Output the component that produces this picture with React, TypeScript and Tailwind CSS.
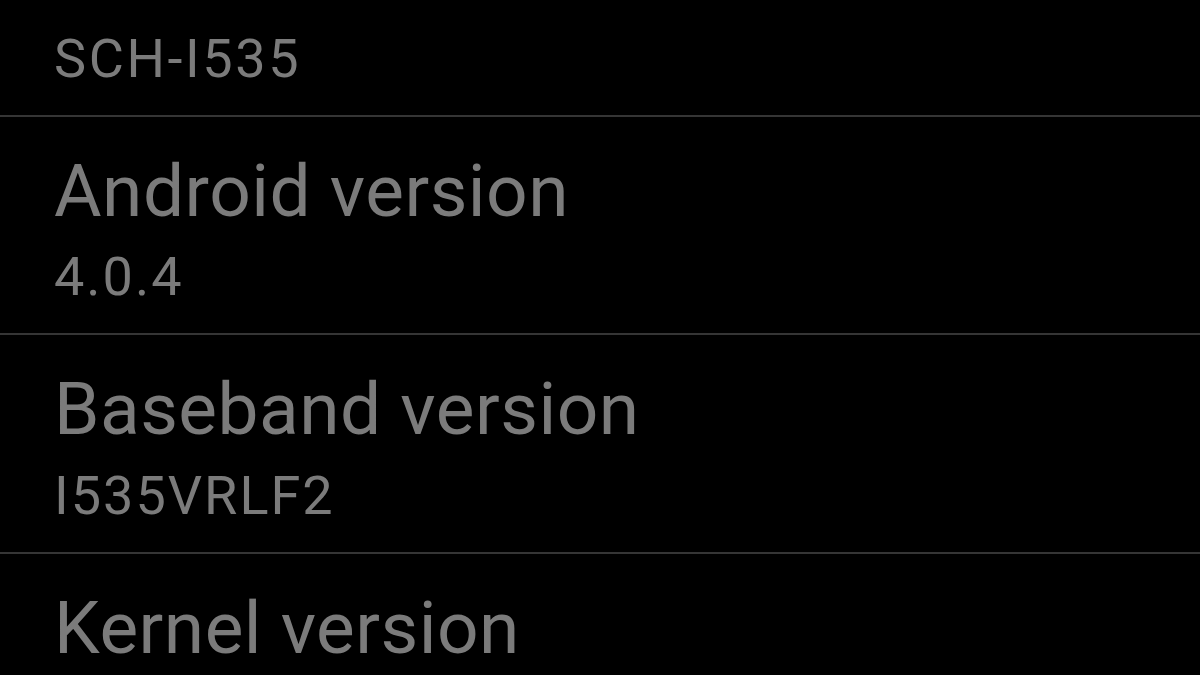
import React from 'react';

type Item = { title?: string; summary?: string };

const items: Item[] = [
  { summary: 'SCH-I535' },
  { title: 'Android version', summary: '4.0.4' },
  { title: 'Baseband version', summary: 'I535VRLF2' },
  { title: 'Kernel version' },
];

const PrefRow: React.FC<{ item: Item }> = ({ item }) => (
  <div className="flex flex-col">
    {item.title ? (
      <div className="h-[216.5px] pl-[54px] pt-[34px]">
        <div className="text-[73px] leading-[80px] tracking-[0.5px] text-[#7b7b7b] whitespace-nowrap">{item.title}</div>
        {item.summary && (
          <div className="mt-[14.5px] text-[54px] leading-[64px] tracking-[2px] text-[#7b7b7b] whitespace-nowrap">{item.summary}</div>
        )}
      </div>
    ) : (
      // row scrolled off the top: only its summary is still on screen
      <div className="h-[114.5px] pl-[54px] pt-[26.5px]">
        <div className="text-[54px] leading-[64px] tracking-[2.6px] text-[#7b7b7b] whitespace-nowrap">{item.summary}</div>
      </div>
    )}
    <div className="h-[2px] bg-[#353535]" />
  </div>
);

const App: React.FC = () => {
  return (
    <div className="h-[675px] w-[1200px] overflow-hidden bg-black" style={{ fontFamily: 'Roboto, "Liberation Sans", sans-serif' }}>
      {items.map((item, i) => (
        <PrefRow key={i} item={item} />
      ))}
    </div>
  );
};

export default App;
